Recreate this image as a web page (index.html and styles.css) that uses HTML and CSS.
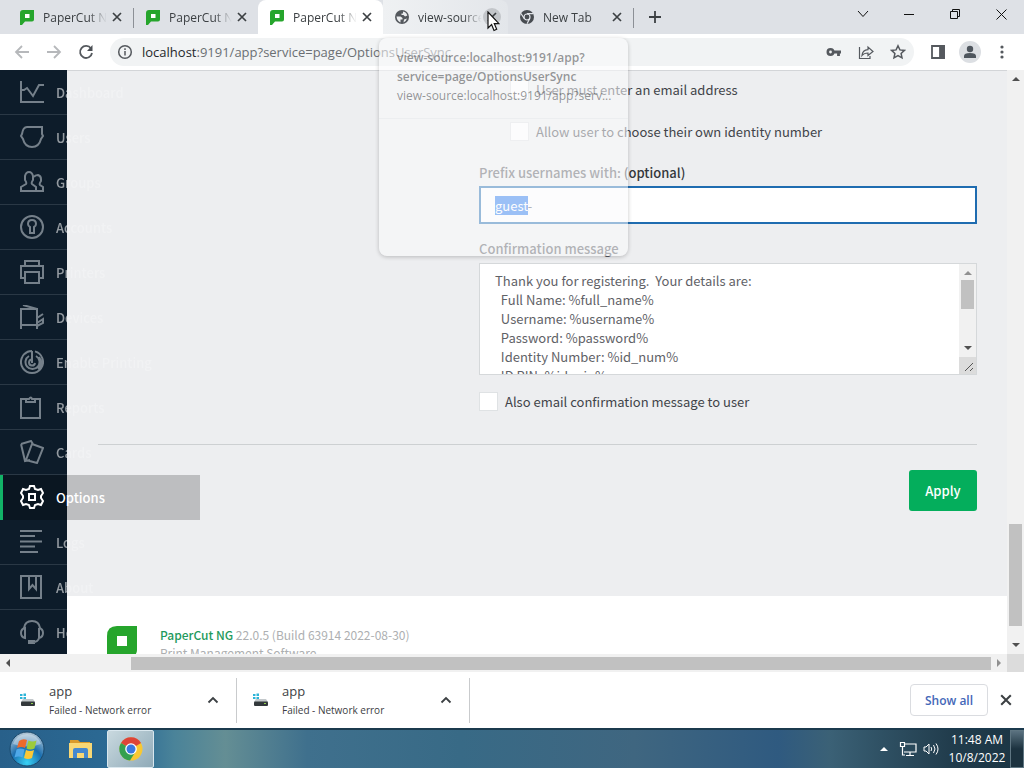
FILE: index.html
```
<!DOCTYPE html>
<html lang="en">
<head>
    <meta charset="UTF-8">
    <meta name="viewport" content="width=device-width, initial-scale=1.0">
    <title>PaperCut NG</title>
    <link rel="stylesheet" href="styles.css">
</head>
<body>
    <!-- shared icons -->
    <svg class="defs" width="0" height="0">
        <symbol id="papercut" viewBox="0 0 14 15">
            <path d="M3 0h11v9.500q0 2-2 2H5L2 15H0V3q0-3 3-3z" fill="#26a52c"/>
            <path d="M5 4h4.500v4H5z" fill="#fff"/>
        </symbol>
        <symbol id="close" viewBox="0 0 10 10">
            <path d="M1 1l8 8M9 1l-8 8" fill="none" stroke="currentColor" stroke-width="1.700"/>
        </symbol>
        <symbol id="caret-up" viewBox="0 0 12 8">
            <path d="M1.500 6.500L6 2l4.500 4.500" fill="none" stroke="currentColor" stroke-width="1.800"/>
        </symbol>
        <symbol id="drive" viewBox="0 0 16 14">
            <path d="M0 1h2.500v2H0zM3.500.5H6v2.500H3.500zM0 4h2.500v2H0zM3.500 4H6v2.500H3.500z" fill="#2db4d8"/>
            <path d="M3 6h10l2 3H1z" fill="#c3c8cb"/>
            <rect x="1" y="8.500" width="14" height="4.500" rx="1" fill="#33383b"/>
            <path d="M11 10.500h2" stroke="#8fd14f"/>
        </symbol>
    </svg>

    <header class="browser">
        <div class="tab-strip">
            <div class="tab">
                <svg class="favicon" width="14" height="15"><use href="#papercut"/></svg>
                <span class="tab-title">PaperCut NG</span>
                <button class="tab-close" aria-label="Close tab"><svg width="10" height="10"><use href="#close"/></svg></button>
            </div>
            <div class="tab divided">
                <svg class="favicon" width="14" height="15"><use href="#papercut"/></svg>
                <span class="tab-title">PaperCut NG</span>
                <button class="tab-close" aria-label="Close tab"><svg width="10" height="10"><use href="#close"/></svg></button>
            </div>
            <div class="tab active">
                <svg class="favicon" width="14" height="15"><use href="#papercut"/></svg>
                <span class="tab-title">PaperCut NG</span>
                <button class="tab-close" aria-label="Close tab"><svg width="10" height="10"><use href="#close"/></svg></button>
            </div>
            <div class="tab hover">
                <svg class="favicon" width="14" height="14" viewBox="0 0 14 14">
                    <circle cx="7" cy="7" r="7" fill="#55595e"/>
                    <path d="M8 1.500q3.500.5 4.300 4L10 6.500 8.500 5H6.500V3.500H8zM1.500 6.500h4L7.500 8v1.500h-2V12.500Q2 11 1.500 6.500zM9 9.500l3-1q-1 3-3.500 4z" fill="#eceef0"/>
                </svg>
                <span class="tab-title">view-source:localhost</span>
                <button class="tab-close" aria-label="Close tab"><svg width="10" height="10"><use href="#close"/></svg></button>
            </div>
            <div class="tab">
                <svg class="favicon" width="14" height="14" viewBox="0 0 14 14">
                    <circle cx="7" cy="7" r="7" fill="#484c51"/>
                    <circle cx="7" cy="7" r="3" fill="none" stroke="#e3e6eb" stroke-width="1.200"/>
                    <path d="M7 3.700h6.200M4.200 8.500L1 3.500M9.800 8.500L7 13.700" stroke="#e3e6eb" stroke-width="1.200"/>
                </svg>
                <span class="tab-title">New Tab</span>
                <button class="tab-close" aria-label="Close tab"><svg width="10" height="10"><use href="#close"/></svg></button>
            </div>
            <button class="new-tab" aria-label="New tab">
                <svg width="12" height="12" viewBox="0 0 12 12"><path d="M6 0v12M0 6h12" stroke="#3c4043" stroke-width="1.800"/></svg>
            </button>
            <div class="window-buttons">
                <button aria-label="Search tabs"><svg width="12" height="8" viewBox="0 0 12 8"><path d="M1 1l5 5.500L11 1"/></svg></button>
                <button aria-label="Minimize"><svg width="10" height="10" viewBox="0 0 10 10"><path d="M0 5.500h10"/></svg></button>
                <button aria-label="Restore"><svg width="10" height="10" viewBox="0 0 10 10"><path d="M.5 2.500h7v7h-7zM2.500 2.500v-2h7v7h-2"/></svg></button>
                <button aria-label="Close"><svg width="11" height="11" viewBox="0 0 11 11"><path d="M.5.5l10 10M10.500.5l-10 10"/></svg></button>
            </div>
        </div>

        <div class="toolbar">
            <button class="tool off" aria-label="Back"><svg width="16" height="16" viewBox="0 0 16 16"><path d="M15 8H2M8 2L2 8l6 6"/></svg></button>
            <button class="tool off" aria-label="Forward"><svg width="16" height="16" viewBox="0 0 16 16"><path d="M1 8h13M8 2l6 6-6 6"/></svg></button>
            <button class="tool" aria-label="Reload"><svg width="16" height="16" viewBox="0 0 16 16"><path d="M13 4.500A6 6 0 1 0 14 9"/><path d="M14.500 1v6H9z" fill="#4b4f54" stroke="none"/></svg></button>
            <div class="omnibox">
                <svg width="16" height="16" viewBox="0 0 16 16"><circle cx="8" cy="8" r="6.300"/><path d="M8 7v4.500M8 4.300V6"/></svg>
                <span class="url"><b>localhost</b>:9191/app?service=page/OptionsUserSync</span>
                <button class="tool" aria-label="Saved passwords">
                    <svg width="16" height="12" viewBox="0 0 16 12"><circle cx="4.500" cy="6" r="2.700" stroke-width="2.600"/><path d="M7 6h8M12.500 6v4" stroke-width="2.800"/></svg>
                </button>
                <button class="tool" aria-label="Share">
                    <svg width="16" height="16" viewBox="0 0 16 16"><path d="M1.500 3v11.500H12V12M4 11.500Q4.500 6 10 5.700V3l5 4.500-5 4V9Q6 9 4 11.500z" stroke-width="1.200"/></svg>
                </button>
                <button class="tool" aria-label="Bookmark">
                    <svg width="16" height="16" viewBox="0 0 16 16"><path d="M8 1.800l1.900 4.100 4.500.5-3.300 3 .9 4.500-4-2.300-4 2.300.9-4.500-3.300-3 4.500-.5z" stroke-width="1.500"/></svg>
                </button>
            </div>
            <button class="tool" aria-label="Side panel"><svg width="16" height="16" viewBox="0 0 16 16"><path d="M2 2h12v12H2z"/><path d="M10 2h4v12h-4z" fill="#55595e"/></svg></button>
            <button class="tool" aria-label="Profile"><svg width="22" height="22" viewBox="0 0 22 22"><circle cx="11" cy="11" r="11" fill="#dcdfe3" stroke="none"/><g fill="#4f565e" stroke="none"><circle cx="11" cy="8" r="3.200"/><path d="M5 17v-2q0-3 6-3t6 3v2z"/></g></svg></button>
            <button class="tool" aria-label="Menu"><svg width="4" height="14" viewBox="0 0 4 14"><g fill="#55595e" stroke="none"><circle cx="2" cy="2" r="1.600"/><circle cx="2" cy="7" r="1.600"/><circle cx="2" cy="12" r="1.600"/></g></svg></button>
        </div>

        <!-- tab preview, fading out -->
        <div class="tab-preview">
            <p class="preview-title">view-source:localhost:9191/app?<br>service=page/OptionsUserSync</p>
            <p class="preview-url">view-source:localhost:9191/app?serv...</p>
            <div class="preview-thumb"></div>
        </div>
        <svg class="cursor" width="13" height="21" viewBox="0 0 13 21"><path d="M1 1v16l3.600-3.400L7 19.500l2.700-1.200L7.300 12.700H12z" fill="#fff" stroke="#111" stroke-width="1.200"/></svg>
    </header>

    <div class="viewport">
        <div class="page">
            <nav class="sidebar">
                <a href="#"><svg viewBox="0 0 24 24"><path d="M1 1v21h23M1 10h3l3-2 6 8 6-11h5"/></svg><span>Dashboard</span></a>
                <a href="#"><svg viewBox="0 0 24 24"><path d="M2 9q1-7 5-7h15v7l1 2-2 3q-2 8-9 8T3 14L1 11z"/></svg><span>Users</span></a>
                <a href="#"><svg viewBox="0 0 24 24"><path d="M16 21H1v-4l5-3q1-1-1-4V6q1-4 4-4t4 4v4q-2 3-1 4l4 3zM14 7q1-2 4-2 3 1 3 4v2q-2 3-1 4l3 2v4h-7"/></svg><span>Groups</span></a>
                <a href="#"><svg viewBox="0 0 24 24"><circle cx="12" cy="12" r="11"/><path d="M10 18v-6q-2-1-2-3 0-4 4-4t4 4q0 2-2 3v6z"/></svg><span>Accounts</span></a>
                <a href="#"><svg viewBox="0 0 24 24"><path d="M5 6V1h14v5M5 18H1V6h22v12h-4M5 12h14v11H5z"/></svg><span>Printers</span></a>
                <a href="#"><svg viewBox="0 0 24 24"><path d="M1 24V4h16v20M1 20h16M3 0l14 4M17 13l6-4M17 18l6-4v4l-6 3"/></svg><span>Devices</span></a>
                <a href="#"><svg viewBox="0 0 24 24"><path d="M15 1.400A11 11 0 1 1 9 1.400M16 6A7 7 0 1 1 9 6M12 1v12M12 9.500A3 3 0 1 0 15 13M12 1Q7 1 5 4M19 7q5 7-1 12"/></svg><span>Enable Printing</span></a>
                <a href="#"><svg viewBox="0 0 24 24"><path d="M6 4H1v19h19V4h-5M6 4v3h9V4h-3q-1-3-3 0z"/></svg><span>Reports</span></a>
                <a href="#"><svg viewBox="0 0 24 24"><path d="M1 4l10-3 2 3M1 4l4 17 5-1M12 4l11 4-6 15-11-3z"/></svg><span>Cards</span></a>
                <a href="#" class="selected"><svg viewBox="0 0 24 24"><path d="M10 1h4l1 3 3 1 3-1 2 4-2 3v2l2 3-2 4-3-1-3 1-1 3h-4l-1-3-3-1-3 1-2-4 2-3v-2L1 8l2-4 3 1 3-1zM9 9h6v6H9z"/></svg><span>Options</span></a>
                <a href="#"><svg viewBox="0 0 24 24"><path d="M0 1h22M0 6h15M0 11.500h22M0 16.500h15M0 22h18"/></svg><span>Logs</span></a>
                <a href="#"><svg viewBox="0 0 24 24"><path d="M1 1h20v22H1zM9 1v13l3.500-4 3.500 4V1"/></svg><span>About</span></a>
                <a href="#"><svg viewBox="0 0 24 24"><path d="M4 8Q5 1 12 1t8 7M5 8v10q-4-1-4-5t4-5zM19 8v10q4-1 4-5t-4-5M19 18q-1 4-6 4M9 21h5v2H9z"/></svg><span>Help</span></a>
            </nav>

            <main>
                <form class="options">
                    <div class="fields">
                        <label class="check nested"><input type="checkbox">User must enter an email address</label>
                        <label class="check nested"><input type="checkbox">Allow user to choose their own identity number</label>
                        <label class="caption" for="prefix">Prefix usernames with: <strong>(optional)</strong></label>
                        <input type="text" id="prefix" value="guest-">
                        <label class="caption" for="message">Confirmation message</label>
                        <div class="message-box">
                            <textarea id="message">Thank you for registering.  Your details are:
  Full Name: %full_name%
  Username: %username%
  Password: %password%
  Identity Number: %id_num%
  ID PIN: %id_pin%</textarea>
                            <div class="scroll-y">
                                <i class="arrow up dim"></i>
                                <i class="thumb"></i>
                                <i class="arrow down"></i>
                                <svg class="grip" width="17" height="17" viewBox="0 0 17 17"><path d="M6 14l8-8M11 14l3-3" stroke="#555"/></svg>
                            </div>
                        </div>
                        <label class="check"><input type="checkbox">Also email confirmation message to user</label>
                    </div>
                    <div class="actions">
                        <button type="button" class="apply">Apply</button>
                    </div>
                </form>
                <footer>
                    <svg width="30" height="30" viewBox="0 0 30 30"><path d="M10 0h20v24q0 6-6 6H0V10Q0 0 10 0z" fill="#26a52c"/><path d="M10 10h10v10H10z" fill="#fff"/></svg>
                    <div class="about">
                        <a href="#">PaperCut NG</a> 22.0.5 (Build 63914 2022-08-30)<br>
                        Print Management Software
                    </div>
                </footer>
            </main>
        </div>

        <div class="scroll-y page-scroll">
            <i class="arrow up"></i>
            <i class="thumb"></i>
            <i class="arrow down"></i>
        </div>
        <div class="scroll-x">
            <i class="arrow left"></i>
            <i class="thumb"></i>
            <i class="arrow right dim"></i>
        </div>
        <div class="corner"></div>
    </div>

    <section class="downloads">
        <div class="download">
            <svg width="16" height="14"><use href="#drive"/></svg>
            <div class="file">
                <div class="file-name">app</div>
                <div class="file-status">Failed - Network error</div>
            </div>
            <button aria-label="Download menu"><svg width="12" height="8"><use href="#caret-up"/></svg></button>
        </div>
        <div class="download">
            <svg width="16" height="14"><use href="#drive"/></svg>
            <div class="file">
                <div class="file-name">app</div>
                <div class="file-status">Failed - Network error</div>
            </div>
            <button aria-label="Download menu"><svg width="12" height="8"><use href="#caret-up"/></svg></button>
        </div>
        <button class="show-all">Show all</button>
        <button class="close-bar" aria-label="Close downloads"><svg width="12" height="12"><use href="#close"/></svg></button>
    </section>

    <div class="taskbar">
        <button class="start" aria-label="Start">
            <svg width="36" height="36" viewBox="0 0 36 36">
                <defs>
                    <radialGradient id="orb" cx=".5" cy=".9" r=".9"><stop offset="0" stop-color="#38d2f5"/><stop offset=".5" stop-color="#1b6fb0"/><stop offset="1" stop-color="#b7c9d6"/></radialGradient>
                </defs>
                <circle cx="18" cy="18" r="17" fill="url(#orb)" stroke="#19486b"/>
                <path d="M4 13Q8 3 18 3t14 10Q18 18 4 13z" fill="#fff" opacity=".35"/>
                <path d="M10 10q4-3 8-1l-2 8q-4-2-8 0z" fill="#ec6a2c"/>
                <path d="M19.500 9.500q4 2 8 0l-2 8q-4 2-8 0z" fill="#9ccb3b"/>
                <path d="M7.500 18.500q4-2 8 0l-2 8q-4-2-8 0z" fill="#4fa8e8"/>
                <path d="M17 19q4 2 8 0l-2 8q-4 2-8 0z" fill="#fbc836"/>
            </svg>
        </button>
        <button class="task" aria-label="Explorer">
            <svg width="23" height="20" viewBox="0 0 23 20"><path d="M1 1h8l2 2h10v4H1z" fill="#d99a2b"/><path d="M0 4h23v15H0z" fill="#f8d775"/><path d="M4 19v-8q0-2 2-2h11q2 0 2 2v8h-4v-5H8v5z" fill="#4488cf"/></svg>
        </button>
        <button class="task current" aria-label="Chrome">
            <svg width="24" height="24" viewBox="0 0 24 24">
                <circle cx="12" cy="12" r="11.500" fill="#f8c832"/>
                <path d="M12 12L2 6a11.500 11.500 0 0 1 20 0z" fill="#dd4438"/>
                <path d="M12 12L2 6a11.500 11.500 0 0 0 9 17.500l5-8z" fill="#34a04f"/>
                <circle cx="12" cy="12" r="5.800" fill="#fff"/><circle cx="12" cy="12" r="4.500" fill="#3978e0"/>
            </svg>
        </button>
        <div class="tray">
            <i class="arrow up"></i>
            <svg width="18" height="16" viewBox="0 0 18 16"><path d="M5 3h12v8H5M11 11v3M7 14.500h8M1.500 1.500h4v4h-4zM3.500 5.500V14H6" fill="none" stroke="#fff" stroke-width="1.200"/></svg>
            <svg width="16" height="14" viewBox="0 0 16 14"><path d="M1 5h2l3-3v10L3 9H1z" fill="none" stroke="#fff"/><path d="M8 5q1.500 2 0 4M10.500 3q3 4 0 8M13 1.500q4 5.500 0 11" fill="none" stroke="#fff"/></svg>
            <div class="clock">11:48 AM<br>10/8/2022</div>
        </div>
        <button class="desktop" aria-label="Show desktop"></button>
    </div>

    <script>
        // prefix is focused with "guest" highlighted
        const prefix = document.getElementById('prefix');
        prefix.focus({ preventScroll: true });
        prefix.setSelectionRange(0, 5);
    </script>
</body>
</html>
```
FILE: styles.css
```
* {
    box-sizing: border-box;
}

body {
    margin: 0;
    height: 100vh;
    display: flex;
    flex-direction: column;
    overflow: hidden;
    font-family: "Open Sans", "Noto Sans", sans-serif;
    font-size: 12px;
    color: #3c4043;
}

button {
    border: none;
    background: none;
    padding: 0;
    font-family: inherit;
    color: inherit;
    display: flex;
    align-items: center;
    justify-content: center;
}

a {
    text-decoration: none;
}

.defs {
    position: absolute;
}

/* browser frame */
.browser {
    position: relative;
    z-index: 5;
}

.tab-strip {
    display: flex;
    height: 34px;
    padding-left: 8px;
    background: #dee1e6;
}

.tab {
    position: relative;
    display: flex;
    align-items: center;
    flex: 0 1 125px;
    min-width: 0;
    padding: 0 7px 0 12px;
}

.tab.divided {
    border-left: 1px solid transparent;
    border-image: linear-gradient(transparent 24%, #8c9096 24%, #8c9096 80%, transparent 80%) 1;
}

.tab.active {
    background: #fff;
    border-radius: 8px 8px 0 0;
}

.tab.hover {
    background: linear-gradient(90deg, #eff1f3, #e3e6ea);
    border-radius: 0 8px 0 0;
}

.favicon {
    flex: none;
}

.tab-title {
    flex: 1;
    margin-left: 9px;
    overflow: hidden;
    white-space: nowrap;
    -webkit-mask-image: linear-gradient(90deg, #000 70%, transparent 98%);
    mask-image: linear-gradient(90deg, #000 70%, transparent 98%);
}

.tab-close {
    flex: none;
    width: 18px;
    height: 18px;
    border-radius: 9px;
}

.hover .tab-close {
    background: #c3c6ca;
}

.new-tab {
    width: 42px;
    border-left: 1px solid transparent;
    border-image: linear-gradient(transparent 24%, #8c9096 24%, #8c9096 80%, transparent 80%) 1;
}

.window-buttons {
    display: flex;
    margin-left: auto;
}

.window-buttons button {
    width: 46px;
    height: 28px;
}

.window-buttons svg {
    fill: none;
    stroke: #111;
}

.toolbar {
    display: flex;
    align-items: center;
    height: 36px;
    padding: 0 6px;
    background: #fff;
}

.tool {
    flex: none;
    width: 32px;
    height: 28px;
}

.tool svg, .omnibox > svg {
    fill: none;
    stroke: #55595e;
    stroke-width: 1.800;
}

.tool.off svg {
    stroke: #b6b8bb;
}

.omnibox {
    display: flex;
    flex: 1;
    align-items: center;
    height: 28px;
    margin: 0 8px;
    padding-left: 7px;
    border-radius: 14px;
    background: #f1f3f4;
}

.omnibox > svg {
    stroke-width: 1.500;
}

.url {
    flex: 1;
    margin-left: 9px;
    font-size: 13px;
    color: #6b6f73;
    white-space: nowrap;
    overflow: hidden;
}

.url b {
    font-weight: normal;
    color: #25282b;
}

.tab-preview {
    position: absolute;
    top: 38px;
    left: 379px;
    width: 249px;
    height: 218px;
    padding: 10px 0 0 18px;
    border-radius: 8px;
    background: rgba(249, 250, 252, 0.56);
    box-shadow: 0 1px 4px rgba(0, 0, 0, 0.22);
    color: rgba(60, 64, 67, 0.54);
}

.tab-preview p {
    margin: 0;
    line-height: 19px;
    white-space: nowrap;
}

.preview-title {
    font-weight: 600;
}

.preview-thumb {
    height: 138px;
    margin: 13px 0 0 -18px;
    border-top: 1px solid rgba(220, 222, 225, 0.3);
}

.cursor {
    position: absolute;
    top: 11px;
    left: 487px;
}

/* page */
.viewport {
    flex: 1;
    min-height: 0;
    display: grid;
    grid-template-columns: 1fr 17px;
    grid-template-rows: 1fr 18px;
}

.page {
    display: flex;
    min-width: 0;
    overflow: hidden;
    background: #edeef0;
    box-shadow: inset 0 1px #d3d5d8;
    font-family: "Noto Sans CJK SC", sans-serif;
    font-size: 13px;
    color: #414449;
}

.sidebar {
    position: relative;
    z-index: 1;
    flex: none;
    width: 67px;
    background: #0d1c2a;
}

.sidebar a {
    display: flex;
    align-items: center;
    gap: 12px;
    width: 200px;
    height: 45px;
    padding: 0 0 1px 20px;
    color: rgba(255, 255, 255, 0.56);
    font-weight: 500;
    background: linear-gradient(#2a3845, #2a3845) left bottom / 67px 1px no-repeat;
}

/* labels run past the dark strip and nearly vanish there */
.sidebar span {
    width: 144px;
    -webkit-mask-image: linear-gradient(90deg, #000 11px, rgba(0, 0, 0, 0.45) 11px);
    mask-image: linear-gradient(90deg, #000 11px, rgba(0, 0, 0, 0.45) 11px);
}

.sidebar svg {
    width: 24px;
    height: 24px;
    flex: none;
    fill: none;
    stroke: #75808a;
    stroke-width: 2;
}

.sidebar a.selected {
    border-left: 3px solid #12b367;
    padding-left: 17px;
    background: rgba(0, 0, 0, 0.2);
    color: #fff;
}

.sidebar .selected span {
    -webkit-mask-image: none;
    mask-image: none;
}

.sidebar .selected svg {
    stroke: #fff;
}

main {
    display: flex;
    flex-direction: column;
    flex: 1;
    min-width: 0;
}

.options {
    flex: none;
    height: 526px;
    padding: 8px 30px 0 31px;
}

.fields {
    padding: 0 0 32px 381px;
    border-bottom: 1px solid #cdd0d2;
}

.check {
    display: flex;
    align-items: center;
    gap: 7px;
    height: 22px;
}

.check.nested {
    margin-bottom: 20px;
    padding-left: 31px;
}

.check input {
    appearance: none;
    width: 19px;
    height: 19px;
    margin: 0;
    border: 1px solid #dfe2e4;
    background: #fff;
}

.caption {
    display: block;
    height: 22px;
    line-height: 22px;
    font-weight: 500;
    color: #55585d;
}

.caption strong {
    font-weight: 500;
    color: #34373b;
}

#prefix {
    display: block;
    width: 100%;
    height: 38px;
    margin: 2px 0 14px;
    padding: 0 14px;
    border: 2px solid #1f6cb0;
    outline: none;
    background: #fff;
    font: inherit;
    color: #5a5d62;
}

#prefix::selection {
    background: #2478ee;
    color: #fff;
}

.message-box {
    display: flex;
    height: 112px;
    margin: 3px 0 15px;
    border: 1px solid #d5d8da;
    background: #fff;
}

#message {
    flex: 1;
    min-width: 0;
    padding: 7px 15px 0;
    border: none;
    outline: none;
    resize: none;
    overflow: hidden;
    background: none;
    font: inherit;
    line-height: 19px;
    color: #5f6267;
}

.actions {
    display: flex;
    justify-content: flex-end;
    padding-top: 25px;
}

.apply {
    width: 68px;
    height: 41px;
    border-radius: 3px;
    background: #04ae5c;
    color: #fff;
    font-size: 13px;
    font-weight: 500;
}

footer {
    display: flex;
    flex: 1;
    padding: 30px 0 0 40px;
    background: #fff;
    font-size: 12px;
    color: #adafb1;
}

.about {
    margin-left: 23px;
    line-height: 18px;
    white-space: nowrap;
}

.about a {
    color: #1f9a5d;
    font-weight: 500;
}

/* scrollbars */
.scroll-y {
    display: flex;
    flex-direction: column;
    align-items: center;
    width: 17px;
    background: #f1f1f1;
}

.scroll-y .arrow {
    margin: 7px 0 5px;
}

.scroll-y .thumb {
    width: 13px;
    height: 29px;
    background: #c1c1c1;
}

.scroll-y .down {
    margin-top: auto;
    margin-bottom: 7px;
}

.grip {
    background: #dcdcdc;
}

.page-scroll .thumb {
    height: 102px;
    margin-top: auto;
}

.page-scroll .down {
    margin-top: 17px;
}

.scroll-x {
    display: flex;
    align-items: center;
    padding: 0 6px;
    background: #f1f1f1;
}

.scroll-x .thumb {
    flex: 1;
    height: 13px;
    margin: 0 6px 0 121px;
    background: #c1c1c1;
}

.corner {
    background: #dcdcdc;
}

.arrow {
    border: 4px solid transparent;
}

.arrow.up {
    border-top: none;
    border-bottom-color: #505050;
}

.arrow.down {
    border-bottom: none;
    border-top-color: #505050;
}

.arrow.left {
    border-left: none;
    border-right-color: #505050;
}

.arrow.right {
    border-right: none;
    border-left-color: #505050;
}

.arrow.dim {
    opacity: 0.6;
}

/* downloads */
.downloads {
    display: flex;
    align-items: center;
    height: 56px;
    padding: 0 8px 0 4px;
    background: #fff;
}

.download {
    display: flex;
    align-items: center;
    flex: 0 1 233px;
    height: 45px;
    padding: 0 17px 0 16px;
    border-right: 1px solid #c9cbcd;
}

.file {
    flex: 1;
    margin-left: 13px;
}

.file-name {
    font-size: 13px;
    line-height: 20px;
}

.file-status {
    font-size: 10px;
    line-height: 18px;
}

.show-all {
    width: 78px;
    height: 32px;
    margin-left: auto;
    border: 1px solid #dadce0;
    border-radius: 4px;
    color: #4468b8;
    font-size: 12px;
    font-weight: 600;
}

.close-bar {
    width: 20px;
    height: 20px;
    margin-left: 8px;
}

/* taskbar */
.taskbar {
    display: flex;
    align-items: center;
    height: 40px;
    border-top: 2px solid #1b3a4e;
    background: linear-gradient(90deg, #28608a 0, #2c6b95 13%, #4a8399 17%, #648e94 22%, #3f708d 30%, #386a86 45%, #3f6680 62%, #2f5a80 76%, #3b6176 81%, #2f5164 86%, #213c4c 93%, #1b3543 100%);
    color: #fff;
}

.start {
    width: 54px;
}

.task {
    width: 47px;
    height: 38px;
    margin-left: 3px;
}

.task.current {
    border: 1px solid #d9e7ee;
    border-radius: 2px;
    background: linear-gradient(135deg, #c9d9df, #8faab8);
}

.tray {
    display: flex;
    align-items: center;
    gap: 6px;
    margin-left: auto;
}

.tray .arrow {
    border-bottom-color: #fff;
    margin-right: 5px;
}

.clock {
    width: 64px;
    line-height: 18px;
    text-align: center;
}

.desktop {
    width: 14px;
    height: 38px;
    margin-left: 1px;
    border: 1px solid #5f7682;
    background: linear-gradient(#5b7280, #1c323f 50%);
}
```
